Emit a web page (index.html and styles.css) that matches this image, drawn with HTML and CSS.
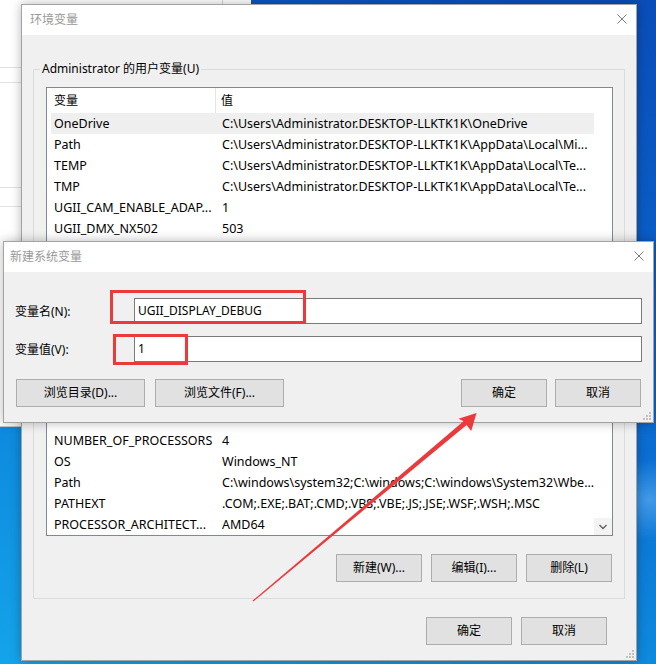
FILE: index.html
```html
<!DOCTYPE html>
<html lang="zh-CN">
<head>
<meta charset="utf-8">
<title>环境变量</title>
<link rel="stylesheet" href="styles.css">
</head>
<body>
<div class="desktop">
  <div class="behind-win">
    <div class="bw-line l1"></div>
    <div class="bw-line l2"></div>
    <div class="bw-line l3"></div>
    <div class="bw-line l4"></div>
    <div class="bw-vline"></div>
  </div>

  <div class="win env-win">
    <div class="titlebar">
      <span class="title">环境变量</span>
      <svg class="close" width="10" height="10" viewBox="0 0 10 10"><path d="M0.5 0.5 L9.5 9.5 M9.5 0.5 L0.5 9.5" stroke="#7a7a7a" stroke-width="1" fill="none"/></svg>
    </div>
    <div class="env-body">
      <fieldset class="group user-group">
        <legend>Administrator 的用户变量(U)</legend>
        <div class="listbox user-list">
          <div class="lv-header">
            <div class="hcell name">变量</div>
            <div class="hcell value">值</div>
          </div>
          <div class="lv-rows top">
            <div class="lv-row selected"><span class="c-name">OneDrive</span><span class="c-val">C:\Users\Administrator.DESKTOP-LLKTK1K\OneDrive</span></div>
            <div class="lv-row"><span class="c-name">Path</span><span class="c-val">C:\Users\Administrator.DESKTOP-LLKTK1K\AppData\Local\Mi...</span></div>
            <div class="lv-row"><span class="c-name">TEMP</span><span class="c-val">C:\Users\Administrator.DESKTOP-LLKTK1K\AppData\Local\Te...</span></div>
            <div class="lv-row"><span class="c-name">TMP</span><span class="c-val">C:\Users\Administrator.DESKTOP-LLKTK1K\AppData\Local\Te...</span></div>
            <div class="lv-row"><span class="c-name">UGII_CAM_ENABLE_ADAP...</span><span class="c-val">1</span></div>
            <div class="lv-row"><span class="c-name">UGII_DMX_NX502</span><span class="c-val">503</span></div>
          </div>
        </div>
        <div class="group-btns-space"></div>
      </fieldset>

      <fieldset class="group sys-group">
        <legend class="empty-legend"></legend>
        <div class="listbox sys-list">
          <div class="lv-rows bottom">
            <div class="lv-row"><span class="c-name">NUMBER_OF_PROCESSORS</span><span class="c-val">4</span></div>
            <div class="lv-row"><span class="c-name">OS</span><span class="c-val">Windows_NT</span></div>
            <div class="lv-row"><span class="c-name">Path</span><span class="c-val">C:\windows\system32;C:\windows;C:\windows\System32\Wbe...</span></div>
            <div class="lv-row"><span class="c-name">PATHEXT</span><span class="c-val">.COM;.EXE;.BAT;.CMD;.VBS;.VBE;.JS;.JSE;.WSF;.WSH;.MSC</span></div>
            <div class="lv-row"><span class="c-name">PROCESSOR_ARCHITECT...</span><span class="c-val">AMD64</span></div>
          </div>
          <div class="scroll-down">
            <svg width="18" height="17" viewBox="0 0 18 17"><path d="M5.5 7 L9 10.5 L12.5 7" stroke="#606060" stroke-width="1.4" fill="none"/></svg>
          </div>
        </div>
        <div class="btn-row group-btns">
          <button class="btn">新建(W)...</button>
          <button class="btn">编辑(I)...</button>
          <button class="btn">删除(L)</button>
        </div>
      </fieldset>

      <div class="btn-row dialog-btns">
        <button class="btn">确定</button>
        <button class="btn">取消</button>
      </div>
    </div>
    <svg class="grip" width="8" height="8" viewBox="0 0 8 8"><g fill="#c2c2c2"><rect x="6" y="0" width="2" height="2"/><rect x="3" y="3" width="2" height="2"/><rect x="6" y="3" width="2" height="2"/><rect x="0" y="6" width="2" height="2"/><rect x="3" y="6" width="2" height="2"/><rect x="6" y="6" width="2" height="2"/></g></svg>
  </div>

  <div class="win new-win">
    <div class="titlebar">
      <span class="title">新建系统变量</span>
      <svg class="close" width="10" height="10" viewBox="0 0 10 10"><path d="M0.5 0.5 L9.5 9.5 M9.5 0.5 L0.5 9.5" stroke="#7a7a7a" stroke-width="1" fill="none"/></svg>
    </div>
    <div class="new-body">
      <div class="form-grid">
        <label class="f-label">变量名(N):</label>
        <div class="f-input">UGII_DISPLAY_DEBUG</div>
        <label class="f-label">变量值(V):</label>
        <div class="f-input">1</div>
      </div>
      <div class="btn-row new-btns">
        <button class="btn wide">浏览目录(D)...</button>
        <button class="btn wide">浏览文件(F)...</button>
        <span class="spacer"></span>
        <button class="btn">确定</button>
        <button class="btn">取消</button>
      </div>
    </div>
    <svg class="grip" width="8" height="8" viewBox="0 0 8 8"><g fill="#c2c2c2"><rect x="6" y="0" width="2" height="2"/><rect x="3" y="3" width="2" height="2"/><rect x="6" y="3" width="2" height="2"/><rect x="0" y="6" width="2" height="2"/><rect x="3" y="6" width="2" height="2"/><rect x="6" y="6" width="2" height="2"/></g></svg>
  </div>

  <div class="mark mark-name"></div>
  <div class="mark mark-value"></div>

  <svg class="arrow" width="656" height="664" viewBox="0 0 656 664">
    <polygon points="252.6,600.6 463.5,421.3 458.5,418.8 476.5,413 471.2,431 466.6,425 253.4,601.4" fill="#ea3a3c"/>
  </svg>
</div>
</body>
</html>
```

FILE: styles.css
```css
* { box-sizing: border-box; }

html, body {
  margin: 0;
  padding: 0;
}

body {
  font-family: "Noto Sans", "Noto Sans CJK SC", sans-serif;
  font-size: 12px;
  color: #000;
}

.desktop {
  position: relative;
  width: 656px;
  height: 664px;
  overflow: hidden;
  background:
    radial-gradient(ellipse 60px 40px at 650px 500px, rgba(120, 190, 250, 0.5), rgba(120, 190, 250, 0) 100%),
    linear-gradient(200deg, #0a4db8 0%, #0b67cf 45%, #0d86dc 70%, #14a4ea 100%);
}

/* window partially hidden behind the dialogs */
.behind-win {
  position: absolute;
  left: 0;
  top: 0;
  width: 251px;
  height: 427px;
  background: #fff;
  border-bottom: 1px solid #c8c8c8;
}

.bw-line {
  position: absolute;
  left: 0;
  width: 230px;
  height: 1px;
  background: #e2e2e2;
}
.bw-line.l1 { top: 67px; }
.bw-line.l2 { top: 82px; }
.bw-line.l3 { top: 187px; }
.bw-line.l4 { top: 206px; }

.bw-vline {
  position: absolute;
  left: 222px;
  top: 0;
  width: 1px;
  height: 427px;
  background: #d5d5d5;
}

/* generic window */
.win {
  position: absolute;
  background: #f0f0f0;
  border: 1px solid #a3a3a3;
  box-shadow: 0 0 10px rgba(0, 0, 0, 0.28);
  display: flex;
  flex-direction: column;
}

.titlebar {
  flex: none;
  height: 30px;
  background: #fff;
  display: flex;
  align-items: center;
  justify-content: space-between;
  padding-right: 9px;
  padding-bottom: 3px;
}

.title {
  color: #999;
  font-size: 12px;
}

.close { display: block; }

.grip {
  position: absolute;
  right: 2px;
  bottom: 2px;
}

/* environment variables dialog */
.env-win {
  left: 21px;
  top: 4px;
  width: 616px;
  height: 657px;
}

.env-win .titlebar { padding-left: 8px; }

.env-body {
  flex: 1;
  display: flex;
  flex-direction: column;
  padding: 0 11px;
}

.group {
  margin: 0;
  border: 1px solid #dcdcdc;
  padding: 10px 11px 12px 12px;
  min-width: 0;
}

.group legend {
  line-height: 16px;
  height: 16px;
  padding: 0 2px;
  margin-left: -6px;
  font-size: 12px;
}

.group legend.empty-legend {
  width: 70px;
}

.user-group { margin-top: 26px; }
.sys-group {
  margin-top: 14px;
  padding-bottom: 16px;
}

.listbox {
  position: relative;
  background: #fff;
  border: 1px solid #828790;
  display: flex;
  flex-direction: column;
  overflow: hidden;
}

.user-list { height: 200px; }
.sys-list { height: 156px; }

.group-btns-space { height: 40px; }

.lv-header {
  flex: none;
  height: 25px;
  display: flex;
  width: 547px;
}

.hcell {
  line-height: 25px;
  white-space: nowrap;
}
.hcell.name {
  width: 169px;
  padding-left: 7px;
  border-right: 1px solid #e5e5e5;
}
.hcell.value {
  flex: 1;
  padding-left: 5px;
}

.lv-rows {
  flex: 1;
  min-height: 0;
  display: flex;
  flex-direction: column;
  padding-left: 4px;
  overflow: hidden;
}
.lv-rows.top { justify-content: flex-start; }
.lv-rows.bottom { justify-content: flex-end; }

.lv-row {
  flex: none;
  display: flex;
  width: 543px;
  height: 21px;
  line-height: 21px;
  font-size: 12.5px;
  white-space: nowrap;
}
.lv-row.selected { background: #efefef; }

.c-name {
  width: 165px;
  padding-left: 3px;
  overflow: hidden;
}
.c-val {
  flex: 1;
  padding-left: 6px;
  overflow: hidden;
}

.scroll-down {
  position: absolute;
  right: 0;
  bottom: 0;
  width: 18px;
  height: 17px;
  background: #f3f3f3;
}
.scroll-down svg { display: block; }

.btn-row {
  display: flex;
  align-items: center;
}

.group-btns {
  justify-content: flex-end;
  gap: 9px;
  margin-top: 18px;
  padding-right: 1px;
}

.btn {
  font-family: inherit;
  font-size: 12px;
  color: #000;
  width: 86px;
  height: 28px;
  padding: 0;
  margin: 0;
  background: #e1e1e1;
  border: 1px solid #adadad;
  border-radius: 0;
  line-height: 26px;
}

.btn.wide { width: 129px; }

.dialog-btns {
  justify-content: flex-end;
  gap: 9px;
  margin-top: 18px;
  padding-right: 18px;
}

/* new system variable dialog */
.new-win {
  left: 3px;
  top: 241px;
  width: 651px;
  height: 182px;
}

.new-win .titlebar { padding-left: 6px; }

.new-body {
  flex: 1;
  padding: 26px 11px 0 11px;
}

.form-grid {
  display: grid;
  grid-template-columns: 119px 1fr;
  grid-auto-rows: 26px;
  row-gap: 12px;
  align-items: center;
}

.f-label {
  white-space: nowrap;
}

.f-input {
  height: 26px;
  background: #fff;
  border: 1px solid #7a7a7a;
  padding-left: 3px;
  line-height: 24px;
  white-space: nowrap;
}

.new-btns {
  margin-top: 17px;
  padding: 0 1px;
}
.new-btns .btn.wide + .btn.wide { margin-left: 10px; }
.new-btns .spacer { flex: 1; }
.new-btns .spacer + .btn + .btn { margin-left: 8px; }

/* red annotation boxes and arrow */
.mark {
  position: absolute;
  border: 3px solid #ea3a3c;
}
.mark-name {
  left: 110px;
  top: 290px;
  width: 196px;
  height: 34px;
}
.mark-value {
  left: 113px;
  top: 334px;
  width: 75px;
  height: 31px;
}

.arrow {
  position: absolute;
  left: 0;
  top: 0;
  pointer-events: none;
}
```
